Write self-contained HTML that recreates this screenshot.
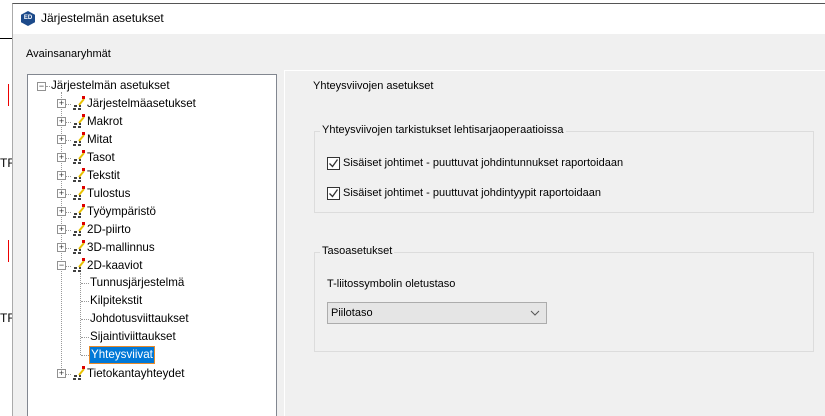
<!DOCTYPE html>
<html><head><meta charset="utf-8"><style>
*{margin:0;padding:0;box-sizing:border-box}
body{width:825px;height:416px;overflow:hidden;background:#fff;font-family:"Liberation Sans",sans-serif;font-size:11px;color:#000;position:relative}
.a{position:absolute}
.dlg{left:12px;top:3px;width:813px;height:413px;background:#f0f0f0;border-left:1px solid #aaa;border-top:1px solid #555}
.title{left:13px;top:4px;width:812px;height:30px;background:#fff}
.tree{left:27px;top:74px;width:250px;height:342px;background:#fff;border:1px solid #828790;border-bottom:none}
.row{position:absolute;height:18px;line-height:18px;font-size:11.6px;white-space:nowrap}
.pm{position:absolute;width:9px;height:9px;border:1px solid #919191;background:#fff;font-size:9px;line-height:7px;text-align:center;color:#333}
.dv{position:absolute;border-left:1px dotted #999}
.dh{position:absolute;border-top:1px dotted #999}
.grp{border:1px solid #dcdcdc}
.cb{position:absolute;width:13px;height:13px;border:1px solid #333;background:#fff}
</style></head><body>
<div class="a" style="left:0;top:38px;width:12px;height:1px;background:#000"></div>
<div class="a" style="left:8px;top:84px;width:1px;height:22px;background:#e00"></div>
<div class="a" style="left:8px;top:240px;width:1px;height:22px;background:#e00"></div>
<div class="a" style="left:0;top:156px;font-size:12px">TR</div>
<div class="a" style="left:0;top:311px;font-size:12px">TR</div>
<div class="a dlg"></div>
<div class="a title"></div>
<div class="a" style="left:21px;top:11px;width:14px;height:15px;background:#1c4a8a;clip-path:polygon(50% 0,100% 25%,100% 75%,50% 100%,0 75%,0 25%);color:#fff;font-size:6px;font-weight:bold;line-height:15px;text-align:center">ED</div>
<div class="a" style="left:41px;top:11px;font-size:12px">Järjestelmän asetukset</div>
<div class="a" style="left:26px;top:48px">Avainsanaryhmät</div>
<div class="a tree"></div>
<div class="a" style="left:284px;top:70px;width:541px;height:346px;border-left:1px solid #fff;border-top:1px solid #fff"></div>
<div class="a" style="left:313px;top:80px">Yhteysviivojen asetukset</div>

<div class="a grp" style="left:314px;top:131px;width:500px;height:82px"></div>
<div class="a" style="left:320px;top:124px;background:#f0f0f0;padding:0 2px">Yhteysviivojen tarkistukset lehtisarjaoperaatioissa</div>
<div class="cb" style="left:327px;top:157px"></div><svg class="a" style="left:328px;top:158px" width="11" height="11"><path d="M1.5 5.5l3 3 5-7" stroke="#333" stroke-width="1.3" fill="none"/></svg>
<div class="a" style="left:343px;top:157px">Sisäiset johtimet - puuttuvat johdintunnukset raportoidaan</div>
<div class="cb" style="left:327px;top:187px"></div><svg class="a" style="left:328px;top:188px" width="11" height="11"><path d="M1.5 5.5l3 3 5-7" stroke="#333" stroke-width="1.3" fill="none"/></svg>
<div class="a" style="left:343px;top:187px">Sisäiset johtimet - puuttuvat johdintyypit raportoidaan</div>

<div class="a grp" style="left:314px;top:252px;width:500px;height:100px"></div>
<div class="a" style="left:320px;top:245px;background:#f0f0f0;padding:0 2px">Tasoasetukset</div>
<div class="a" style="left:327px;top:278px">T-liitossymbolin oletustaso</div>
<div class="a" style="left:327px;top:302px;width:220px;height:22px;background:#e5e5e5;border:1px solid #acacac;padding-left:3px;line-height:20px">Piilotaso</div>
<svg class="a" style="left:530px;top:310px" width="10" height="6"><path d="M1 1l4 4 4-4" stroke="#555" fill="none"/></svg>

<!-- tree -->
<div class="dv" style="left:61px;top:92px;height:282px"></div>
<div class="dv" style="left:80px;top:273px;height:82px"></div>
<div class="pm" style="left:37px;top:82px">−</div><div class="dh" style="left:46px;top:86px;width:4px"></div>
<div class="row" style="left:51px;top:77px">Järjestelmän asetukset</div>
<div id="t"></div>
<script>
var it=["Järjestelmäasetukset","Makrot","Mitat","Tasot","Tekstit","Tulostus","Työympäristö","2D-piirto","3D-mallinnus","2D-kaaviot"];
var h="";
var ic='<path d="M2 13h3M7 13h3M3 10h3M8 10h2" stroke="#000" stroke-width="1.5" fill="none"/><path d="M8 9l5-6" stroke="#e8c000" stroke-width="2"/><rect x="11" y="0" width="3" height="3" fill="#d00"/>';
it.forEach(function(s,i){var y=95+i*18;
h+='<div class="pm" style="left:57px;top:'+(y+4)+'px">'+(i==9?'−':'+')+'</div>';
h+='<div class="dh" style="left:66px;top:'+(y+9)+'px;width:5px"></div>';
h+='<svg class="a" style="left:71px;top:'+(y+1)+'px" width="14" height="15">'+ic+'</svg>';
h+='<div class="row" style="left:87px;top:'+y+'px">'+s+'</div>';});
var sub=["Tunnusjärjestelmä","Kilpitekstit","Johdotusviittaukset","Sijaintiviittaukset","Yhteysviivat"];
sub.forEach(function(s,i){var y=275+i*18;
h+='<div class="dh" style="left:81px;top:'+(y+8)+'px;width:8px"></div>';
if(i==4)h+='<div class="row" style="left:89px;top:'+(y-1)+'px;background:#0078d7;color:#fff;border:1px solid #e88a2a;padding:0 1px;height:18px;line-height:16px">'+s+'</div>';
else h+='<div class="row" style="left:90px;top:'+(y-1)+'px">'+s+'</div>';});
var y=365;
h+='<div class="pm" style="left:57px;top:'+(y+4)+'px">+</div><div class="dh" style="left:66px;top:'+(y+9)+'px;width:5px"></div>';
h+='<svg class="a" style="left:71px;top:'+(y+1)+'px" width="14" height="15">'+ic+'</svg>';
h+='<div class="row" style="left:87px;top:'+y+'px">Tietokantayhteydet</div>';
document.getElementById("t").innerHTML=h;
</script>
</body></html>
